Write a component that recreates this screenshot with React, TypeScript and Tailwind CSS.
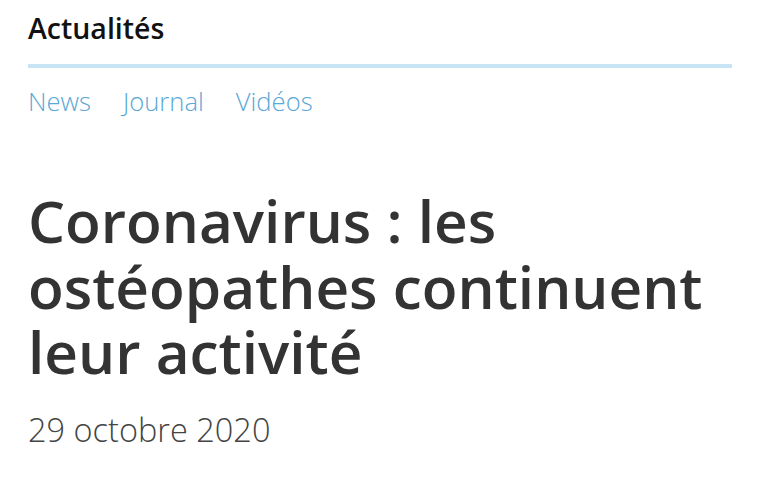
export default function App() {
  return (
    <div className="min-h-screen bg-white px-[28px] pt-[10px] font-['Open_Sans',sans-serif]">
      <h2 className="text-[28.5px] leading-[36px] font-semibold text-[#111]">Actualités</h2>
      <div className="mt-[18px] h-[4px] bg-[#c8e5f5]" />
      <nav className="mt-[16px] flex gap-[32px] text-[25.6px] leading-[36px] font-light text-[#5aa7d8]">
        <a href="#">News</a>
        <a href="#">Journal</a>
        <a href="#">Vidéos</a>
      </nav>
      <h1 className="mt-[68px] text-[58.5px] leading-[65.5px] font-semibold text-[#333]">
        Coronavirus : les ostéopathes continuent leur activité
      </h1>
      <p className="mt-[23px] text-[32.5px] leading-[44px] font-light text-[#444]">29 octobre 2020</p>
    </div>
  );
}
